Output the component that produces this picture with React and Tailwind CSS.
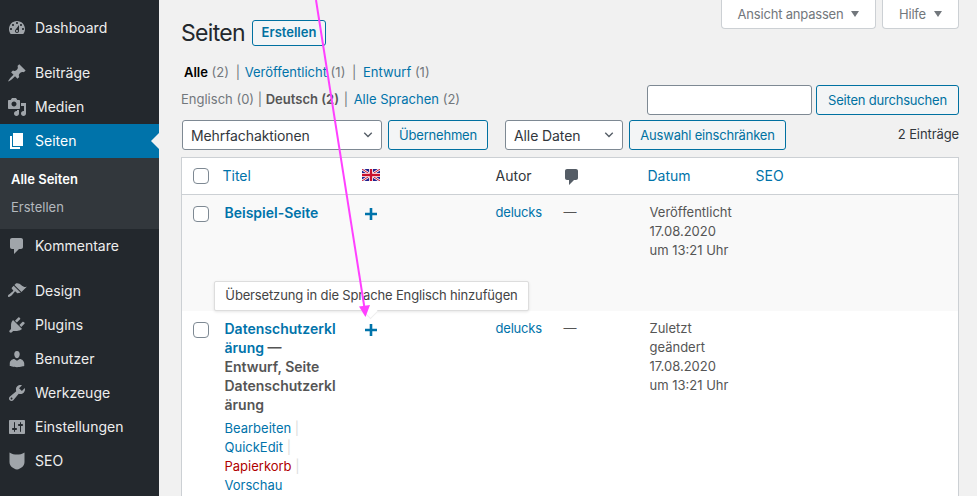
import React from 'react';

const icons = {
  dashboard: 'M3.76 16h12.48c1.1-1.37 1.76-3.11 1.76-5 0-4.42-3.58-8-8-8s-8 3.58-8 8c0 1.89.66 3.63 1.76 5zM10 4c.55 0 1 .45 1 1s-.45 1-1 1-1-.45-1-1 .45-1 1-1zM6 6c.55 0 1 .45 1 1s-.45 1-1 1-1-.45-1-1 .45-1 1-1zm8 0c.55 0 1 .45 1 1s-.45 1-1 1-1-.45-1-1 .45-1 1-1zm-5.37 5.55L12 7v6c0 1.1-.9 2-2 2s-2-.9-2-2c0-.57.24-1.08.63-1.45zM4 10c.55 0 1 .45 1 1s-.45 1-1 1-1-.45-1-1 .45-1 1-1zm12 0c.55 0 1 .45 1 1s-.45 1-1 1-1-.45-1-1 .45-1 1-1zm-5 3c0-.55-.45-1-1-1s-1 .45-1 1 .45 1 1 1 1-.45 1-1z',
  post: 'M10.44 3.02l1.82-1.82 6.36 6.35-1.83 1.82c-1.05-.68-2.48-.57-3.41.36l-.75.75c-.92.93-1.04 2.35-.35 3.41l-1.83 1.82-2.41-2.41-2.8 2.79c-.42.42-3.38 2.71-3.8 2.29s1.86-3.39 2.28-3.81l2.79-2.79L4.1 9.36l1.83-1.82c1.05.69 2.48.57 3.4-.36l.75-.75c.93-.92 1.05-2.35.36-3.41z',
  media: 'M13 11V4c0-.55-.45-1-1-1h-1.67L9 1H5L3.67 3H2c-.55 0-1 .45-1 1v7c0 .55.45 1 1 1h10c.55 0 1-.45 1-1zM7 4.5c1.38 0 2.5 1.12 2.5 2.5S8.38 9.5 7 9.5 4.5 8.38 4.5 7 5.62 4.5 7 4.5zM14 6h5v10.5c0 1.38-1.12 2.5-2.5 2.5S14 17.88 14 16.5s1.12-2.5 2.5-2.5c.17 0 .34.02.5.05V9h-3V6zm-4 8.05V13h2v3.5c0 1.38-1.12 2.5-2.5 2.5S7 17.88 7 16.5 8.12 14 9.5 14c.17 0 .34.02.5.05z',
  page: 'M6 15V2h10v13H6zm-1 1h8v2H3V5h2v11z',
  comment: 'M5 2h9c1.1 0 2 .9 2 2v7c0 1.1-.9 2-2 2h-2l-5 5v-5H5c-1.1 0-2-.9-2-2V4c0-1.1.9-2 2-2z',
  design: 'M14.48 11.06L7.41 3.99l1.5-1.5c.5-.56 2.3-.47 3.51.32 1.21.8 1.43 1.28 2.91 2.1 1.18.64 2.45 1.26 4.45.85zm-.71.71L6.7 4.7 4.93 6.47c-.39.39-.39 1.02 0 1.41l1.06 1.06c.39.39.39 1.03 0 1.42-.6.6-1.43 1.11-2.21 1.69-.35.26-.7.53-1.01.84C1.43 13.23.4 14.91 1.2 15.7c.79.8 2.47-.23 3.83-1.59.31-.31.58-.66.85-1.02.57-.77 1.08-1.6 1.67-2.19.39-.39 1.03-.39 1.42 0l1.06 1.06c.39.39 1.02.39 1.41 0z',
  plugins: 'M13.11 4.36L9.87 7.6 8 5.73l3.24-3.24c.35-.34 1.05-.2 1.56.32.52.51.66 1.21.31 1.55zm-8 1.77l.91-1.12 9.01 9.01-1.19.84c-.71.71-2.63 1.16-3.82 1.16H6.14L4.9 17.26c-.59.59-1.54.59-2.12 0-.59-.58-.59-1.53 0-2.12l1.24-1.24v-3.88c0-1.13.4-3.19 1.09-3.89zm7.26 3.97l3.24-3.24c.34-.35 1.04-.21 1.55.31.52.51.66 1.21.31 1.55l-3.24 3.25z',
  users: 'M10 9.25c-2.27 0-2.73-3.44-2.73-3.44C7 4.02 7.82 2 9.97 2c2.16 0 2.98 2.02 2.71 3.81 0 0-.41 3.44-2.68 3.44zm0 2.57L12.72 10c2.39 0 4.52 2.33 4.52 4.53v2.49s-3.65 1.13-7.24 1.13c-3.65 0-7.24-1.13-7.24-1.13v-2.49c0-2.25 1.94-4.48 4.47-4.48z',
  tools: 'M16.68 9.77c-1.34 1.34-3.3 1.67-4.95.99l-5.41 6.52c-.99.99-2.59.99-3.58 0s-.99-2.59 0-3.57l6.52-5.42c-.68-1.65-.35-3.61.99-4.95 1.28-1.28 3.12-1.62 4.72-1.06l-2.89 2.89 2.82 2.82 2.86-2.87c.53 1.58.18 3.39-1.08 4.65zM3.81 16.21c.4.39 1.04.39 1.43 0 .4-.4.4-1.04 0-1.43-.39-.4-1.03-.4-1.43 0-.39.39-.39 1.03 0 1.43z',
  settings: 'M18 16V4c0-.55-.45-1-1-1H3c-.55 0-1 .45-1 1v12c0 .55.45 1 1 1h14c.55 0 1-.45 1-1zM8 11h1c.55 0 1 .45 1 1s-.45 1-1 1H8v1.5c0 .28-.22.5-.5.5s-.5-.22-.5-.5V13H6c-.55 0-1-.45-1-1s.45-1 1-1h1V5.5c0-.28.22-.5.5-.5s.5.22.5.5V11zm5-2h-1c-.55 0-1-.45-1-1s.45-1 1-1h1V5.5c0-.28.22-.5.5-.5s.5.22.5.5V7h1c.55 0 1 .45 1 1s-.45 1-1 1h-1v5.5c0 .28-.22.5-.5.5s-.5-.22-.5-.5V9z',
  seo: 'M2.5 1.5C5 3.2 7.5 3.5 10 3.5s5-.3 7.5-2V11c0 4-3.5 6.8-7.5 7.5-4-.7-7.5-3.5-7.5-7.5z',
};

function Icon({ name, className }) {
  return (
    <svg viewBox="0 0 20 20" className={className} fill="currentColor" fillRule="evenodd">
      <path d={icons[name]} />
    </svg>
  );
}

function MenuItem({ icon, label, active }) {
  return (
    <div className={`relative flex h-[34px] items-center pl-[7px] text-[14px] ${active ? 'bg-[#0073aa] text-white' : 'text-[#eeeeee]'}`}>
      <Icon name={icon} className={`h-5 w-5 ${active ? 'text-white' : 'text-[#a0a5aa]'}`} />
      <span className="mb-[2px] ml-2">{label}</span>
      {active && (
        <span className="absolute right-0 top-[9px] h-0 w-0 border-y-[8px] border-r-[8px] border-y-transparent border-r-[#f1f1f1]" />
      )}
    </div>
  );
}

function Sidebar() {
  return (
    <div className="h-full w-[159px] shrink-0 bg-[#23282d] pt-[11px]">
      <MenuItem icon="dashboard" label="Dashboard" />
      <div className="h-[11px]" />
      <MenuItem icon="post" label="Beiträge" />
      <MenuItem icon="media" label="Medien" />
      <MenuItem icon="page" label="Seiten" active />
      <div className="h-[71px] bg-[#32373c] pt-[12px] text-[13px]">
        <div className="h-[28px] pl-[11px] font-semibold leading-[19px] text-white">Alle Seiten</div>
        <div className="pl-[11px] leading-[19px] text-[#b4b9be]">Erstellen</div>
      </div>
      <MenuItem icon="comment" label="Kommentare" />
      <div className="h-[11px]" />
      <MenuItem icon="design" label="Design" />
      <MenuItem icon="plugins" label="Plugins" />
      <MenuItem icon="users" label="Benutzer" />
      <MenuItem icon="tools" label="Werkzeuge" />
      <MenuItem icon="settings" label="Einstellungen" />
      <MenuItem icon="seo" label="SEO" />
    </div>
  );
}

function Chevron() {
  return (
    <svg viewBox="0 0 12 8" className="h-[6px] w-[10px]" fill="none" stroke="#555d66" strokeWidth="1.8">
      <path d="M1 1l5 5 5-5" />
    </svg>
  );
}

function Select({ label, width }) {
  return (
    <div className={`flex h-[30px] items-center justify-between rounded-[3px] border border-[#7e8993] bg-white pl-[8px] pr-[8px] text-[14px] tracking-[-0.1px] text-[#32373c] ${width}`}>
      <span>{label}</span>
      <Chevron />
    </div>
  );
}

function Button({ children, className = '' }) {
  return (
    <button className={`flex h-[30px] items-center justify-center rounded-[3px] border border-[#0071a1] bg-[#f3f5f6] pt-px text-[13px] tracking-[-0.2px] text-[#0071a1] ${className}`}>
      {children}
    </button>
  );
}

function MetaTab({ label, width }) {
  return (
    <div className={`flex h-[29px] items-center justify-center gap-[8px] rounded-b-[4px] border border-t-0 border-[#ccd0d4] bg-white pt-px text-[13px] tracking-[-0.2px] text-[#72777c] ${width}`}>
      <span>{label}</span>
      <span className="mt-[-2px] h-0 w-0 border-x-[4px] border-t-[6px] border-x-transparent border-t-[#72777c]" />
    </div>
  );
}

function Flag() {
  return (
    <svg viewBox="0 0 18 12" className="h-[12px] w-[18px]">
      <rect width="18" height="12" fill="#23238e" />
      <path d="M0 0l18 12M18 0L0 12" stroke="#fff" strokeWidth="2.4" />
      <path d="M0 0l18 12M18 0L0 12" stroke="#c8102e" strokeWidth="1" />
      <path d="M9 0v12M0 6h18" stroke="#fff" strokeWidth="4" />
      <path d="M9 0v12M0 6h18" stroke="#c8102e" strokeWidth="2.4" />
    </svg>
  );
}

function Checkbox() {
  return <span className="block h-4 w-4 rounded-[4px] border border-[#7e8993] bg-white" />;
}

function Plus() {
  return (
    <svg viewBox="0 0 14 14" className="h-[14px] w-[14px]" fill="none" stroke="#0073aa" strokeWidth="2.6">
      <path d="M7 1v12M1 7h12" />
    </svg>
  );
}

const pages = [
  {
    title: 'Beispiel-Seite',
    date: ['Veröffentlicht', '17.08.2020', 'um 13:21 Uhr'],
    bg: 'bg-[#f9f9f9]',
    height: 'h-[116px]',
  },
  {
    title: 'Datenschutzerklärung',
    state: ' — Entwurf, Seite Datenschutzerklärung',
    date: ['Zuletzt', 'geändert', '17.08.2020', 'um 13:21 Uhr'],
    bg: 'bg-white',
    height: 'h-[190px]',
    actions: true,
  },
];

function Row({ page }) {
  return (
    <tr className={`${page.bg} ${page.height} align-top`}>
      <td className="pl-[11px] pt-[11px]">
        <Checkbox />
      </td>
      <td className="px-[10px] pt-[8px] leading-[19px]">
        <div className="[overflow-wrap:anywhere] text-[14px] font-semibold text-[#555555]">
          <a className="text-[#0073aa]">{page.title}</a>
          {page.state}
        </div>
        {page.actions && (
          <div className="mt-[5px] text-[13px] leading-[19px] text-[#dddddd]">
            <div><a className="text-[#0073aa]">Bearbeiten</a> |</div>
            <div><a className="text-[#0073aa]">QuickEdit</a> |</div>
            <div><a className="text-[#b00000]">Papierkorb</a> |</div>
            <div><a className="text-[#0073aa]">Vorschau</a></div>
          </div>
        )}
      </td>
      <td className="pl-[13px] pt-[12px]">
        <Plus />
      </td>
      <td className="px-[10px] pt-[8px] tracking-[-0.2px] text-[#0073aa]">delucks</td>
      <td className="px-[10px] pt-[8px]">—</td>
      <td className="pl-[12px] pr-[8px] pt-[8px] leading-[19px]">
        {page.date.map((line) => (
          <div key={line}>{line}</div>
        ))}
      </td>
      <td />
    </tr>
  );
}

function PagesTable() {
  return (
    <table className="mt-[7px] w-full table-fixed border-collapse border border-[#ccd0d4] bg-white text-[13px] text-[#555555]">
      <colgroup>
        <col className="w-[33px]" />
        <col className="w-[136px]" />
        <col className="w-[135px]" />
        <col className="w-[68px]" />
        <col className="w-[84px]" />
        <col className="w-[108px]" />
        <col />
      </colgroup>
      <thead>
        <tr className="h-[37px] border-b border-[#ccd0d4] text-left font-normal">
          <th className="pl-[11px] font-normal"><Checkbox /></th>
          <th className="pb-[1px] pl-[8px] text-[14px] font-normal text-[#0073aa]">Titel</th>
          <th className="pb-[2px] pl-[11px] font-normal"><Flag /></th>
          <th className="px-[10px] pb-[1px] text-[14px] font-normal text-[#32373c]">Autor</th>
          <th className="pl-[8px] pt-[2px] font-normal">
            <Icon name="comment" className="h-5 w-5 text-[#555d66]" />
          </th>
          <th className="px-[10px] pb-[1px] text-[14px] font-normal text-[#0073aa]">Datum</th>
          <th className="px-[10px] pb-[1px] text-[14px] font-normal text-[#0073aa]">SEO</th>
        </tr>
      </thead>
      <tbody>
        {pages.map((page) => (
          <Row key={page.title} page={page} />
        ))}
      </tbody>
    </table>
  );
}

function Main() {
  return (
    <div className="h-full flex-1 bg-[#f1f1f1] pl-[22px] pr-[18px]">
      <div className="flex items-start justify-between">
        <div className="flex items-center pt-[20px]">
          <h1 className="w-[71px] text-[23px] leading-[26px] tracking-[-0.7px] text-[#23282d]">Seiten</h1>
          <button className="h-[26px] w-[74px] rounded-[3px] border border-[#0071a1] bg-[#f3f5f6] text-[13px] font-semibold text-[#0071a1]">
            Erstellen
          </button>
        </div>
        <div className="flex gap-[6px]">
          <MetaTab label="Ansicht anpassen" width="w-[155px]" />
          <MetaTab label="Hilfe" width="w-[77px]" />
        </div>
      </div>

      <div className="mt-[16px] h-[20px] pl-[3px] text-[13px] leading-[20px] text-[#72777c]">
        <span className="font-semibold text-black">Alle</span> (2) <span className="ml-[3px] mr-[1px] text-[#72777c]">|</span>{' '}
        <a className="text-[#0073aa]">Veröffentlicht</a> (1) <span className="mx-[3px] text-[#72777c]">|</span>{' '}
        <a className="text-[#0073aa]">Entwurf</a> (1)
      </div>

      <div className="mt-[3px] flex h-[30px] items-center justify-between">
        <div className="text-[13px] text-[#72777c]">
          Englisch (0) | <span className="font-semibold text-[#555555]">Deutsch (2)</span>{' '}
          <span className="ml-[1px] mr-[2px]">|</span>{' '}
          <a className="text-[#0073aa]">Alle Sprachen</a> (2)
        </div>
        <div className="flex gap-[4px]">
          <div className="h-[30px] w-[165px] rounded-[3px] border border-[#7e8993] bg-white" />
          <Button className="w-[143px]">Seiten durchsuchen</Button>
        </div>
      </div>

      <div className="mt-[5px] flex h-[30px] items-center">
        <div className="ml-[1px]">
          <Select label="Mehrfachaktionen" width="w-[200px]" />
        </div>
        <Button className="ml-[6px] w-[100px]">Übernehmen</Button>
        <div className="ml-[17px]">
          <Select label="Alle Daten" width="w-[118px]" />
        </div>
        <Button className="ml-[6px] w-[157px]">Auswahl einschränken</Button>
        <div className="ml-auto text-[13px] tracking-[-0.1px] text-[#32373c]">2 Einträge</div>
      </div>

      <PagesTable />
    </div>
  );
}

export default function App() {
  return (
    <div className="relative flex h-[496px] overflow-hidden font-['Inter','Liberation_Sans',sans-serif]">
      <Sidebar />
      <Main />

      <div className="absolute left-[214px] top-[281px] flex h-[30px] w-[315px] items-center justify-center rounded-[2px] border border-[#dddddd] bg-white text-[13px] tracking-[-0.15px] text-[#444444] shadow-[0_1px_3px_rgba(0,0,0,0.1)]">
        Übersetzung in die Sprache Englisch hinzufügen
        <span className="absolute left-[150px] top-[24px] h-[11px] w-[11px] rotate-45 border-b border-r border-[#eeeeee] bg-white" />
      </div>

      <svg className="pointer-events-none absolute left-0 top-0 h-[496px] w-[977px]" viewBox="0 0 977 496">
        <path d="M316 0L364.5 308" stroke="#ff40ff" strokeWidth="2" fill="none" />
        <path d="M359 306.5L370 305L365.5 317z" fill="#ff40ff" />
      </svg>
    </div>
  );
}
